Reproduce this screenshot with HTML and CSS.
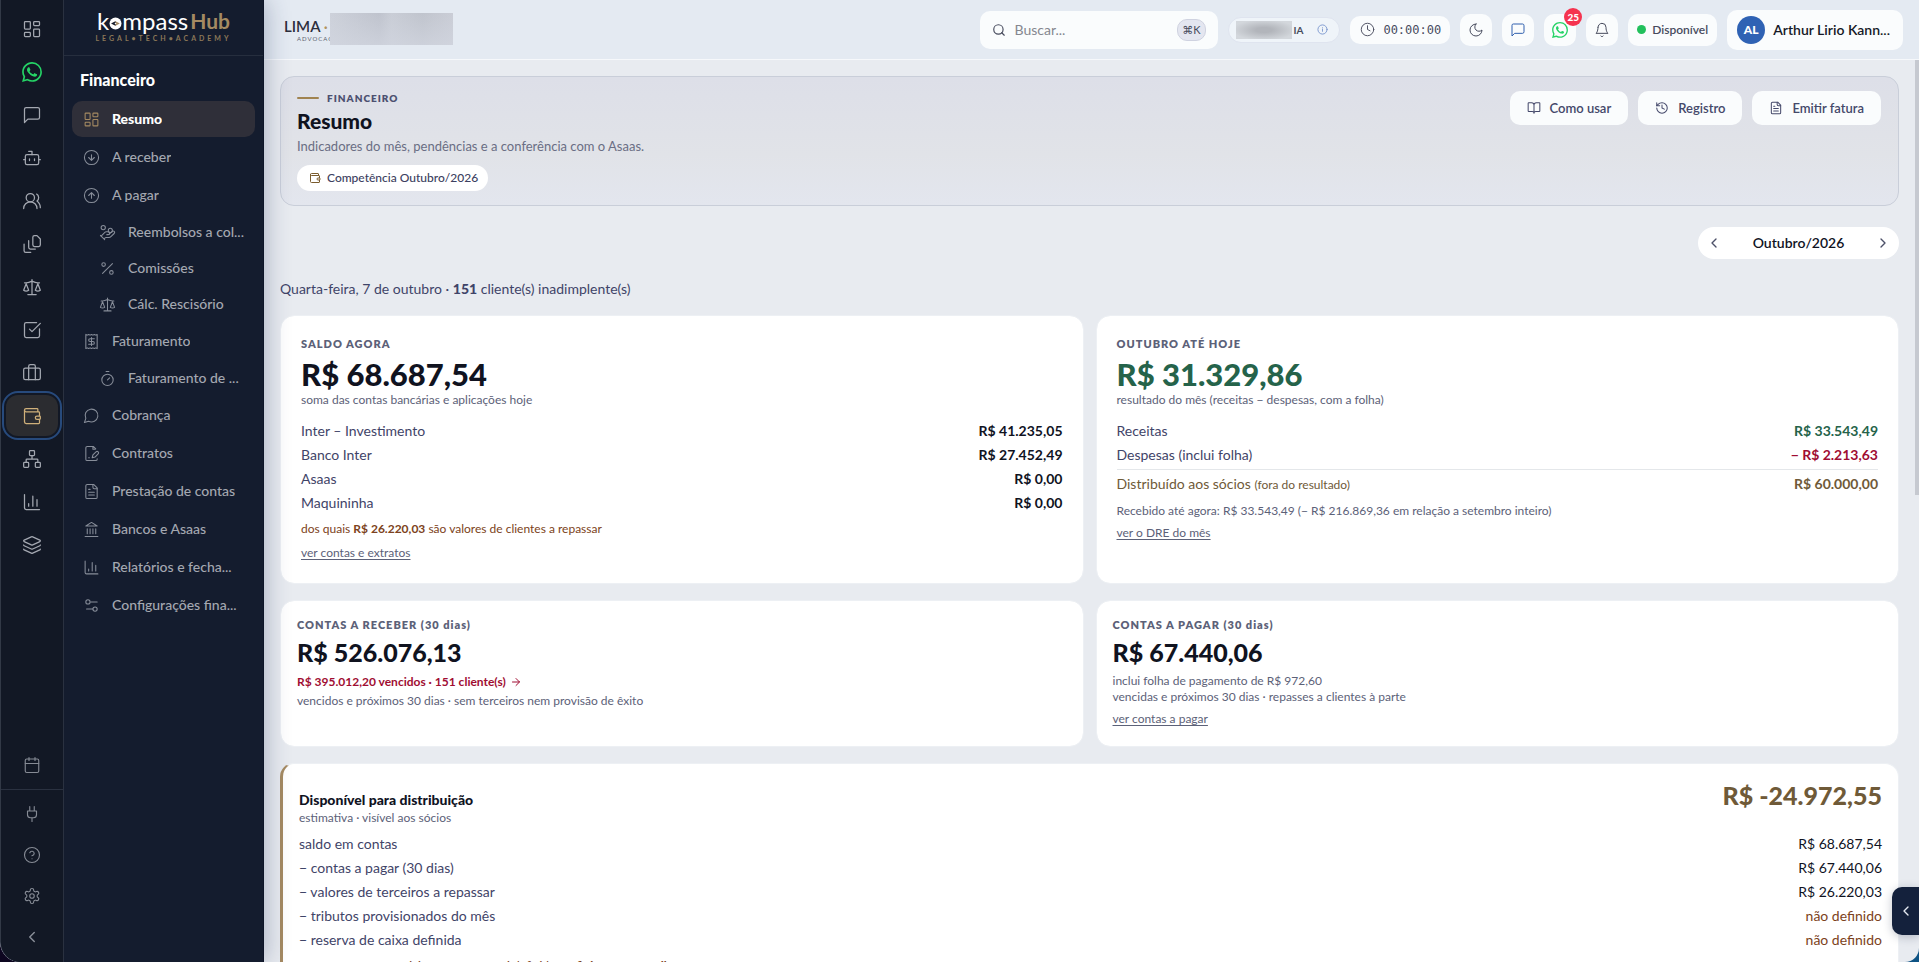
FILE: index.html
```html
<!DOCTYPE html>
<html lang="pt-BR">
<head>
<meta charset="utf-8">
<meta name="viewport" content="width=device-width, initial-scale=1">
<title>Resumo · Financeiro · kompassHub</title>
<link rel="stylesheet" href="styles.css">
</head>
<body>
<svg class="sprite" aria-hidden="true">
  <symbol id="i-dash" viewBox="0 0 24 24"><rect x="3" y="3" width="7" height="9" rx="1"/><rect x="14" y="3" width="7" height="5" rx="1"/><rect x="14" y="12" width="7" height="9" rx="1"/><rect x="3" y="16" width="7" height="5" rx="1"/></symbol>
  <symbol id="i-wa" viewBox="0 0 24 24"><path fill="currentColor" stroke="none" d="M17.472 14.382c-.297-.149-1.758-.867-2.03-.967-.273-.099-.471-.148-.67.15-.197.297-.767.966-.94 1.164-.173.199-.347.223-.644.075-.297-.15-1.255-.463-2.39-1.475-.883-.788-1.48-1.761-1.653-2.059-.173-.297-.018-.458.13-.606.134-.133.298-.347.446-.52.149-.174.198-.298.298-.497.099-.198.05-.371-.025-.52-.075-.149-.669-1.612-.916-2.207-.242-.579-.487-.5-.669-.51-.173-.008-.371-.01-.57-.01-.198 0-.52.074-.792.372-.272.297-1.04 1.016-1.04 2.479 0 1.462 1.065 2.875 1.213 3.074.149.198 2.096 3.2 5.077 4.487.709.306 1.262.489 1.694.625.712.227 1.36.195 1.871.118.571-.085 1.758-.719 2.006-1.413.248-.694.248-1.289.173-1.413-.074-.124-.272-.198-.57-.347m-5.421 7.403h-.004a9.87 9.87 0 01-5.031-1.378l-.361-.214-3.741.982.998-3.648-.235-.374a9.86 9.86 0 01-1.51-5.26c.001-5.45 4.436-9.884 9.888-9.884 2.64 0 5.122 1.03 6.988 2.898a9.825 9.825 0 012.893 6.994c-.003 5.45-4.437 9.884-9.885 9.884m8.413-18.297A11.815 11.815 0 0012.05 0C5.495 0 .16 5.335.157 11.892c0 2.096.547 4.142 1.588 5.945L.057 24l6.305-1.654a11.882 11.882 0 005.683 1.448h.005c6.554 0 11.89-5.335 11.893-11.893a11.821 11.821 0 00-3.48-8.413z"/></symbol>
  <symbol id="i-msg" viewBox="0 0 24 24"><path d="M21 15a2 2 0 0 1-2 2H7l-4 4V5a2 2 0 0 1 2-2h14a2 2 0 0 1 2 2z"/></symbol>
  <symbol id="i-bot" viewBox="0 0 24 24"><path d="M12 8V4H8"/><rect x="4" y="8" width="16" height="12" rx="2"/><path d="M2 14h2M20 14h2M15 13v2M9 13v2"/></symbol>
  <symbol id="i-users" viewBox="0 0 24 24"><path d="M18 21a8 8 0 0 0-16 0"/><circle cx="10" cy="8" r="5"/><path d="M22 20c0-3.37-2-6.5-4-8a5 5 0 0 0-.45-8.3"/></symbol>
  <symbol id="i-files" viewBox="0 0 24 24"><path d="M20 15h-5a2 2 0 0 1-2-2V4a2 2 0 0 1 2-2h3l4 4v7a2 2 0 0 1-2 2z"/><path d="M8 8v8a2 2 0 0 0 2 2h6M2.500 12v8a2 2 0 0 0 2 2h6"/></symbol>
  <symbol id="i-scale" viewBox="0 0 24 24"><path d="m16 16 3-8 3 8c-.87.65-1.920 1-3 1s-2.130-.35-3-1Z"/><path d="m2 16 3-8 3 8c-.87.65-1.920 1-3 1s-2.130-.35-3-1Z"/><path d="M7 21h10M12 3v18M3 7h2c2 0 5-1 7-2 2 1 5 2 7 2h2"/></symbol>
  <symbol id="i-check" viewBox="0 0 24 24"><path d="M21 10.500V19a2 2 0 0 1-2 2H5a2 2 0 0 1-2-2V5a2 2 0 0 1 2-2h12.500"/><path d="m9 11 3 3L22 4"/></symbol>
  <symbol id="i-case" viewBox="0 0 24 24"><rect x="2" y="6" width="20" height="14" rx="2"/><path d="M16 20V4a2 2 0 0 0-2-2h-4a2 2 0 0 0-2 2v16"/></symbol>
  <symbol id="i-wallet" viewBox="0 0 24 24"><path d="M19 7V4a1 1 0 0 0-1-1H5a2 2 0 0 0 0 4h15a1 1 0 0 1 1 1v4h-3a2 2 0 0 0 0 4h3a1 1 0 0 0 1-1v-2a1 1 0 0 0-1-1"/><path d="M3 5v14a2 2 0 0 0 2 2h15a1 1 0 0 0 1-1v-4"/></symbol>
  <symbol id="i-org" viewBox="0 0 24 24"><rect x="16" y="16" width="6" height="6" rx="1"/><rect x="2" y="16" width="6" height="6" rx="1"/><rect x="9" y="2" width="6" height="6" rx="1"/><path d="M5 16v-3a1 1 0 0 1 1-1h12a1 1 0 0 1 1 1v3M12 12V8"/></symbol>
  <symbol id="i-chart" viewBox="0 0 24 24"><path d="M3 3v16a2 2 0 0 0 2 2h16M18 17V9M13 17V5M8 17v-3"/></symbol>
  <symbol id="i-layers" viewBox="0 0 24 24"><path d="M12.830 2.180a2 2 0 0 0-1.660 0L2.600 6.080a1 1 0 0 0 0 1.830l8.580 3.910a2 2 0 0 0 1.660 0l8.580-3.900a1 1 0 0 0 0-1.830z"/><path d="M2 12a1 1 0 0 0 .58.91l8.600 3.910a2 2 0 0 0 1.650 0l8.580-3.900A1 1 0 0 0 22 12"/><path d="M2 17a1 1 0 0 0 .58.91l8.600 3.910a2 2 0 0 0 1.650 0l8.580-3.900A1 1 0 0 0 22 17"/></symbol>
  <symbol id="i-cal" viewBox="0 0 24 24"><path d="M8 2v4M16 2v4M3 10h18"/><rect x="3" y="4" width="18" height="18" rx="2"/></symbol>
  <symbol id="i-plug" viewBox="0 0 24 24"><path d="M12 22v-5M9 8V2M15 8V2M18 8v5a4 4 0 0 1-4 4h-4a4 4 0 0 1-4-4V8Z"/></symbol>
  <symbol id="i-help" viewBox="0 0 24 24"><circle cx="12" cy="12" r="10"/><path d="M9.090 9a3 3 0 0 1 5.830 1c0 2-3 3-3 3M12 17h.01"/></symbol>
  <symbol id="i-gear" viewBox="0 0 24 24"><path d="M12.220 2h-.44a2 2 0 0 0-2 2v.18a2 2 0 0 1-1 1.730l-.43.25a2 2 0 0 1-2 0l-.15-.08a2 2 0 0 0-2.730.73l-.22.38a2 2 0 0 0 .73 2.730l.15.1a2 2 0 0 1 1 1.720v.51a2 2 0 0 1-1 1.740l-.15.09a2 2 0 0 0-.73 2.730l.22.38a2 2 0 0 0 2.730.73l.15-.08a2 2 0 0 1 2 0l.43.25a2 2 0 0 1 1 1.730V20a2 2 0 0 0 2 2h.44a2 2 0 0 0 2-2v-.18a2 2 0 0 1 1-1.730l.43-.25a2 2 0 0 1 2 0l.15.08a2 2 0 0 0 2.730-.73l.22-.39a2 2 0 0 0-.73-2.730l-.15-.08a2 2 0 0 1-1-1.740v-.5a2 2 0 0 1 1-1.740l.15-.09a2 2 0 0 0 .73-2.730l-.22-.38a2 2 0 0 0-2.730-.73l-.15.08a2 2 0 0 1-2 0l-.43-.25a2 2 0 0 1-1-1.730V4a2 2 0 0 0-2-2z"/><circle cx="12" cy="12" r="3"/></symbol>
  <symbol id="i-left" viewBox="0 0 24 24"><path d="m15 18-6-6 6-6"/></symbol>
  <symbol id="i-right" viewBox="0 0 24 24"><path d="m9 18 6-6-6-6"/></symbol>
  <symbol id="i-down" viewBox="0 0 24 24"><circle cx="12" cy="12" r="10"/><path d="M12 8v8M8 12l4 4 4-4"/></symbol>
  <symbol id="i-up" viewBox="0 0 24 24"><circle cx="12" cy="12" r="10"/><path d="m16 12-4-4-4 4M12 16V8"/></symbol>
  <symbol id="i-coins" viewBox="0 0 24 24"><path d="M11 15h2a2 2 0 1 0 0-4h-3c-.6 0-1.100.2-1.400.6L3 17"/><path d="m7 21 1.600-1.400c.3-.4.8-.6 1.400-.6h4c1.100 0 2.100-.4 2.800-1.200l4.600-4.400a2 2 0 0 0-2.750-2.910l-4.200 3.900M2 16l6 6"/><circle cx="16" cy="9" r="2.900"/><circle cx="6" cy="5" r="3"/></symbol>
  <symbol id="i-pct" viewBox="0 0 24 24"><path d="M19 5 5 19"/><circle cx="6.500" cy="6.500" r="2.500"/><circle cx="17.500" cy="17.500" r="2.500"/></symbol>
  <symbol id="i-receipt" viewBox="0 0 24 24"><path d="M4 2v20l2-1 2 1 2-1 2 1 2-1 2 1 2-1 2 1V2l-2 1-2-1-2 1-2-1-2 1-2-1-2 1Z"/><path d="M16 8h-6a2 2 0 1 0 0 4h4a2 2 0 1 1 0 4H8M12 17.500v-11"/></symbol>
  <symbol id="i-timer" viewBox="0 0 24 24"><path d="M10 2h4M12 14l3-3"/><circle cx="12" cy="14" r="8"/></symbol>
  <symbol id="i-bubble" viewBox="0 0 24 24"><path d="M7.900 20A9 9 0 1 0 4 16.100L2 22Z"/></symbol>
  <symbol id="i-sign" viewBox="0 0 24 24"><path d="M20 19.500v.5a2 2 0 0 1-2 2H6a2 2 0 0 1-2-2V4a2 2 0 0 1 2-2h8.500L18 5.500M8 18h1M14 2v4h3"/><path d="M18.400 9.600a2 2 0 0 1 3 3L17 17l-4 1 1-4Z"/></symbol>
  <symbol id="i-doc" viewBox="0 0 24 24"><path d="M15 2H6a2 2 0 0 0-2 2v16a2 2 0 0 0 2 2h12a2 2 0 0 0 2-2V7Z"/><path d="M14 2v4a2 2 0 0 0 2 2h4M10 9H8M16 13H8M16 17H8"/></symbol>
  <symbol id="i-bank" viewBox="0 0 24 24"><path d="M3 22h18M6 18v-7M10 18v-7M14 18v-7M18 18v-7M12 2l8 5H4z"/></symbol>
  <symbol id="i-conf" viewBox="0 0 24 24"><path d="M20 7h-9M14 17H5"/><circle cx="17" cy="17" r="3"/><circle cx="7" cy="7" r="3"/></symbol>
  <symbol id="i-search" viewBox="0 0 24 24"><circle cx="11" cy="11" r="8"/><path d="m21 21-4.300-4.300"/></symbol>
  <symbol id="i-info" viewBox="0 0 24 24"><circle cx="12" cy="12" r="10"/><path d="M12 16v-5M12 8h.01"/></symbol>
  <symbol id="i-clock" viewBox="0 0 24 24"><circle cx="12" cy="12" r="10"/><path d="M12 6v6l4 2"/></symbol>
  <symbol id="i-moon" viewBox="0 0 24 24"><path d="M12 3a6 6 0 0 0 9 9 9 9 0 1 1-9-9Z"/></symbol>
  <symbol id="i-bell" viewBox="0 0 24 24"><path d="M10.300 21a1.940 1.940 0 0 0 3.400 0M6 8a6 6 0 0 1 12 0c0 7 3 9 3 9H3s3-2 3-9"/></symbol>
  <symbol id="i-book" viewBox="0 0 24 24"><path d="M12 7v14M3 18a1 1 0 0 1-1-1V4a1 1 0 0 1 1-1h5a4 4 0 0 1 4 4 4 4 0 0 1 4-4h5a1 1 0 0 1 1 1v13a1 1 0 0 1-1 1h-6a3 3 0 0 0-3 3 3 3 0 0 0-3-3z"/></symbol>
  <symbol id="i-hist" viewBox="0 0 24 24"><path d="M3 12a9 9 0 1 0 9-9 9.750 9.750 0 0 0-6.740 2.740L3 8"/><path d="M3 3v5h5M12 7v5l4 2"/></symbol>
  <symbol id="i-arrow" viewBox="0 0 24 24"><path d="M5 12h14M12 5l7 7-7 7"/></symbol>
</svg>

<div class="app">
  <aside class="sidebar">
    <nav class="rail" aria-label="Módulos">
      <div class="rail-main">
        <a href="#" aria-label="Painel"><svg><use href="#i-dash"/></svg></a>
        <a href="#" aria-label="WhatsApp" class="rail-wa"><svg><use href="#i-wa"/></svg></a>
        <a href="#" aria-label="Mensagens"><svg><use href="#i-msg"/></svg></a>
        <a href="#" aria-label="Assistente"><svg><use href="#i-bot"/></svg></a>
        <a href="#" aria-label="Clientes"><svg><use href="#i-users"/></svg></a>
        <a href="#" aria-label="Documentos"><svg><use href="#i-files"/></svg></a>
        <a href="#" aria-label="Processos"><svg><use href="#i-scale"/></svg></a>
        <a href="#" aria-label="Tarefas"><svg><use href="#i-check"/></svg></a>
        <a href="#" aria-label="Casos"><svg><use href="#i-case"/></svg></a>
        <a href="#" aria-label="Financeiro" class="rail-active"><svg><use href="#i-wallet"/></svg></a>
        <a href="#" aria-label="Organização"><svg><use href="#i-org"/></svg></a>
        <a href="#" aria-label="Relatórios"><svg><use href="#i-chart"/></svg></a>
        <a href="#" aria-label="Camadas"><svg><use href="#i-layers"/></svg></a>
      </div>
      <a href="#" class="rail-cal" aria-label="Agenda"><svg><use href="#i-cal"/></svg></a>
      <div class="rail-foot">
        <a href="#" aria-label="Integrações"><svg><use href="#i-plug"/></svg></a>
        <a href="#" aria-label="Ajuda"><svg><use href="#i-help"/></svg></a>
        <a href="#" aria-label="Configurações"><svg><use href="#i-gear"/></svg></a>
        <button type="button" aria-label="Recolher menu"><svg><use href="#i-left"/></svg></button>
      </div>
    </nav>
    <div class="panel">
      <div class="logo">
        <div class="logo-name">k<svg viewBox="0 0 24 24" role="img" aria-label="o"><circle cx="12" cy="12" r="11" fill="#fff"/><path d="m4 12 8-4 8 4-8 4z" fill="#a58a62"/><path d="m4 12 8-4v8z" fill="#141d30"/><circle cx="12" cy="12" r="1.500" fill="#fff"/></svg>mpass<span>Hub</span></div>
        <div class="logo-tag">LEGAL•TECH•ACADEMY</div>
      </div>
      <nav class="menu" aria-label="Financeiro">
        <h2>Financeiro</h2>
        <a href="#" class="on"><svg><use href="#i-dash"/></svg><span>Resumo</span></a>
        <a href="#"><svg><use href="#i-down"/></svg><span>A receber</span></a>
        <a href="#"><svg><use href="#i-up"/></svg><span>A pagar</span></a>
        <a href="#" class="sub"><svg><use href="#i-coins"/></svg><span>Reembolsos a col...</span></a>
        <a href="#" class="sub"><svg><use href="#i-pct"/></svg><span>Comissões</span></a>
        <a href="#" class="sub"><svg><use href="#i-scale"/></svg><span>Cálc. Rescisório</span></a>
        <a href="#"><svg><use href="#i-receipt"/></svg><span>Faturamento</span></a>
        <a href="#" class="sub"><svg><use href="#i-timer"/></svg><span>Faturamento de ...</span></a>
        <a href="#"><svg><use href="#i-bubble"/></svg><span>Cobrança</span></a>
        <a href="#"><svg><use href="#i-sign"/></svg><span>Contratos</span></a>
        <a href="#"><svg><use href="#i-doc"/></svg><span>Prestação de contas</span></a>
        <a href="#"><svg><use href="#i-bank"/></svg><span>Bancos e Asaas</span></a>
        <a href="#"><svg><use href="#i-chart"/></svg><span>Relatórios e fecha...</span></a>
        <a href="#"><svg><use href="#i-conf"/></svg><span>Configurações fina...</span></a>
      </nav>
    </div>
  </aside>

  <div class="page">
    <header class="top">
      <div class="brand">
        <div class="brand-name">LIMA <i>·</i></div>
        <div class="brand-sub">ADVOCAC</div>
        <div class="brand-mask"></div>
      </div>
      <label class="search">
        <svg><use href="#i-search"/></svg>
        <input type="search" placeholder="Buscar..." aria-label="Buscar">
        <kbd>⌘K</kbd>
      </label>
      <button type="button" class="ai"><span class="ai-mask"></span>IA<svg><use href="#i-info"/></svg></button>
      <button type="button" class="clock"><svg><use href="#i-clock"/></svg>00:00:00</button>
      <button type="button" class="sq" aria-label="Tema escuro"><svg><use href="#i-moon"/></svg></button>
      <button type="button" class="sq sq-blue" aria-label="Mensagens"><svg><use href="#i-msg"/></svg></button>
      <button type="button" class="sq sq-green" aria-label="WhatsApp"><svg><use href="#i-wa"/></svg><span class="badge">25</span></button>
      <button type="button" class="sq" aria-label="Notificações"><svg><use href="#i-bell"/></svg></button>
      <button type="button" class="status"><span class="dot"></span>Disponível</button>
      <button type="button" class="user"><span class="avatar">AL</span>Arthur Lirio Kann...</button>
    </header>

    <main class="content">
      <section class="hero">
        <div>
          <p class="eyebrow">FINANCEIRO</p>
          <h1>Resumo</h1>
          <p class="lead">Indicadores do mês, pendências e a conferência com o Asaas.</p>
          <span class="chip"><svg><use href="#i-wallet"/></svg>Competência Outubro/2026</span>
        </div>
        <div class="actions">
          <button type="button"><svg><use href="#i-book"/></svg>Como usar</button>
          <button type="button"><svg><use href="#i-hist"/></svg>Registro</button>
          <button type="button"><svg><use href="#i-doc"/></svg>Emitir fatura</button>
        </div>
      </section>

      <div class="month">
        <button type="button" aria-label="Mês anterior"><svg><use href="#i-left"/></svg></button>
        <strong>Outubro/2026</strong>
        <button type="button" aria-label="Próximo mês"><svg><use href="#i-right"/></svg></button>
      </div>

      <p class="today">Quarta-feira, 7 de outubro · <b>151</b> cliente(s) inadimplente(s)</p>

      <div class="cards">
        <section class="card card-lg">
          <h3>SALDO AGORA</h3>
          <p class="amount">R$ 68.687,54</p>
          <p class="small">soma das contas bancárias e aplicações hoje</p>
          <dl class="rows">
            <div><dt>Inter – Investimento</dt><dd>R$ 41.235,05</dd></div>
            <div><dt>Banco Inter</dt><dd>R$ 27.452,49</dd></div>
            <div><dt>Asaas</dt><dd>R$ 0,00</dd></div>
            <div><dt>Maquininha</dt><dd>R$ 0,00</dd></div>
          </dl>
          <p class="small warn">dos quais <b>R$ 26.220,03</b> são valores de clientes a repassar</p>
          <a href="#" class="more">ver contas e extratos</a>
        </section>

        <section class="card card-lg">
          <h3>OUTUBRO ATÉ HOJE</h3>
          <p class="amount green">R$ 31.329,86</p>
          <p class="small">resultado do mês (receitas − despesas, com a folha)</p>
          <dl class="rows">
            <div><dt>Receitas</dt><dd class="green">R$ 33.543,49</dd></div>
            <div><dt>Despesas (inclui folha)</dt><dd class="red">− R$ 2.213,63</dd></div>
            <div class="split"><dt>Distribuído aos sócios <small>(fora do resultado)</small></dt><dd>R$ 60.000,00</dd></div>
          </dl>
          <p class="small">Recebido até agora: R$ 33.543,49 (− R$ 216.869,36 em relação a setembro inteiro)</p>
          <a href="#" class="more">ver o DRE do mês</a>
        </section>

        <section class="card">
          <h3>CONTAS A RECEBER (30 dias)</h3>
          <p class="amount">R$ 526.076,13</p>
          <a href="#" class="overdue">R$ 395.012,20 vencidos · 151 cliente(s) <svg><use href="#i-arrow"/></svg></a>
          <p class="small">vencidos e próximos 30 dias · sem terceiros nem provisão de êxito</p>
        </section>

        <section class="card">
          <h3>CONTAS A PAGAR (30 dias)</h3>
          <p class="amount">R$ 67.440,06</p>
          <p class="small">inclui folha de pagamento de R$ 972,60</p>
          <p class="small">vencidas e próximos 30 dias · repasses a clientes à parte</p>
          <a href="#" class="more">ver contas a pagar</a>
        </section>

        <section class="card wide">
          <div class="wide-head">
            <div>
              <h2>Disponível para distribuição</h2>
              <p class="small">estimativa · visível aos sócios</p>
            </div>
            <p class="amount">R$ -24.972,55</p>
          </div>
          <dl class="rows plain">
            <div><dt>saldo em contas</dt><dd>R$ 68.687,54</dd></div>
            <div><dt>− contas a pagar (30 dias)</dt><dd>R$ 67.440,06</dd></div>
            <div><dt>− valores de terceiros a repassar</dt><dd>R$ 26.220,03</dd></div>
            <div><dt>− tributos provisionados do mês</dt><dd class="warn">não definido</dd></div>
            <div><dt>− reserva de caixa definida</dt><dd class="warn">não definido</dd></div>
          </dl>
          <p class="small warn">Os números são parciais: reserva não foi definida. <b>Definir reserva e tributos</b></p>
        </section>
      </div>
    </main>
    <div class="scroll-thumb"></div>
    <button type="button" class="drawer" aria-label="Abrir painel lateral"><svg><use href="#i-left"/></svg></button>
  </div>
</div>
</body>
</html>
```
FILE: styles.css
```css
* { box-sizing: border-box; }

body {
  margin: 0;
  height: 100vh;
  overflow: hidden;
  font-family: Lato, "Open Sans", sans-serif;
  font-size: 14px;
  line-height: 20px;
  color: #10131f;
  background: linear-gradient(90deg, #0d0620 0, #0d0620 50%, #0e5384 100%);
}

h1, h2, h3, p, dl, dd { margin: 0; }
a { color: inherit; text-decoration: none; }
button, input { font: inherit; color: inherit; }
button { padding: 0; border: 0; background: none; cursor: pointer; }

svg {
  flex: none;
  width: 16px;
  height: 16px;
  fill: none;
  stroke: currentColor;
  stroke-width: 2;
  stroke-linecap: round;
  stroke-linejoin: round;
}
.sprite { position: absolute; width: 0; height: 0; }

.app {
  display: flex;
  height: 100%;
  overflow: hidden;
  border-radius: 0 0 14px 20px;
  background: #e8ebf0;
}

/* Sidebar */
.sidebar {
  position: relative;
  z-index: 2;
  display: flex;
  flex: none;
  color: #a4a8b1;
  background: #141c2e;
  border-left: 1px solid #323946;
  border-radius: 0 0 0 20px;
  box-shadow: 2px 0 24px rgba(30, 45, 90, 0.3);
}
.rail {
  display: flex;
  flex-direction: column;
  width: 63px;
  background: #121825;
  border-right: 1px solid #2a3140;
  border-radius: 0 0 0 20px;
}
.rail svg { width: 20px; height: 20px; stroke-width: 1.5; }
.rail-main {
  display: flex;
  flex: 1;
  flex-direction: column;
  gap: 2px;
  padding: 8px 5px;
}
.rail a, .rail button { display: flex; align-items: center; justify-content: center; height: 41px; border-radius: 12px; }
.rail .rail-wa { color: #25d366; }
.rail .rail-active {
  color: #cfb07a;
  background: #2b2c30;
  outline: 2px solid #274a7c;
  outline-offset: 2px;
}
.rail .rail-cal { height: 50px; border-bottom: 1px solid #2a3140; border-radius: 0; }
.rail .rail-cal svg, .rail-foot svg { width: 18px; height: 18px; color: #868b95; }
.rail-foot { display: flex; flex-direction: column; padding: 3px 5px 5px; }
.rail-foot button svg { stroke-width: 2; }

.panel { width: 200px; border-right: 1px solid #0e1528; }
.logo {
  display: flex;
  flex-direction: column;
  align-items: center;
  height: 56px;
  padding-top: 8px;
  border-bottom: 1px solid #262e3e;
}
.logo-name { display: flex; align-items: center; height: 26px; color: #fff; font-size: 24px; }
.logo-name svg { width: 13px; height: 13px; margin-top: 5px; stroke: none; }
.logo-name span { margin-left: 2px; color: #a58a62; font-weight: 700; font-size: 21px; }
.logo-tag { font-size: 7px; line-height: 8px; font-weight: 700; letter-spacing: 3px; color: #8c7858; white-space: nowrap; }

.menu { display: flex; flex-direction: column; gap: 2px; padding: 12px 8px; }
.menu h2 { padding: 2px 8px 9px; color: #fff; font-size: 16px; line-height: 20px; font-weight: 900; }
.menu a {
  display: flex;
  align-items: center;
  gap: 12px;
  height: 36px;
  padding: 0 8px 0 11px;
  border-radius: 10px;
  font-weight: 500;
}
.menu span { overflow: hidden; white-space: nowrap; }
.menu svg { width: 17px; height: 17px; stroke-width: 1.5; color: #878d99; }
.menu .sub { height: 34px; padding-left: 27px; }
.menu .on { color: #fff; font-weight: 900; background: #2f2f39; }
.menu .on svg { color: #a58a62; }

/* Header */
.page { position: relative; display: flex; flex: 1; flex-direction: column; min-width: 0; }
.top {
  display: flex;
  flex: none;
  align-items: center;
  gap: 10px;
  height: 60px;
  padding: 0 16px 0 20px;
  color: #474b5d;
  background: #e4eaf2;
  border-bottom: 1px solid #f6f8fb;
}
.brand { position: relative; margin-right: auto; width: 170px; color: #2c2e3c; }
.brand-name { font-size: 15px; line-height: 18px; font-weight: 600; }
.brand-name i { color: #b0935e; font-style: normal; }
.brand-sub { padding-left: 13px; font-size: 6px; line-height: 8px; letter-spacing: 1px; color: #5b5f6e; }
.brand-mask {
  position: absolute;
  top: -4px;
  left: 46px;
  width: 123px;
  height: 32px;
  background: linear-gradient(0deg, rgba(210, 214, 224, 0.7), rgba(210, 214, 224, 0)), linear-gradient(90deg, #cdd1da 0%, #bfc3cd 40%, #c9cdd6 50%, #c0c4cd 75%, #cacdd6 100%);
}

.search {
  display: flex;
  align-items: center;
  gap: 9px;
  width: 238px;
  height: 38px;
  padding: 0 12px;
  border-radius: 10px;
  background: #fafcfd;
}
.search svg { width: 14px; height: 14px; }
.search input { flex: 1; min-width: 0; padding: 0; border: 0; outline: 0; background: none; }
.search input::placeholder { color: #85878f; opacity: 1; }
.search kbd {
  padding: 0 4px;
  border: 1px solid #cfd2e0;
  border-radius: 10px;
  background: #e4e6f0;
  font: 11px/20px Lato, "DejaVu Sans", sans-serif;
}
.ai {
  display: flex;
  align-items: center;
  gap: 2px;
  height: 26px;
  padding: 0 11px 0 7px;
  border: 1px solid #dfe4ef;
  border-radius: 13px;
  background: #eff4f9;
  font-size: 10px;
  font-weight: 700;
}
.ai svg { width: 11px; height: 11px; margin-left: 12px; color: #7b97cf; }
.ai-mask { width: 56px; height: 18px; background: radial-gradient(ellipse, #b2b5bb 20%, #d3d7dc 80%); }
.clock, .sq, .status, .user { display: flex; align-items: center; background: #fafcfd; border-radius: 10px; }
.clock {
  gap: 8px;
  height: 28px;
  padding: 0 9px 0 10px;
  font: 12px/20px "DejaVu Sans Mono", monospace;
}
.clock svg { width: 15px; height: 15px; stroke-width: 1.5; }
.sq { position: relative; justify-content: center; width: 32px; height: 32px; }
.sq svg { stroke-width: 1.5; }
.sq-blue { color: #2f5fae; }
.sq-green { color: #25d366; }
.badge {
  position: absolute;
  top: -6px;
  right: -6px;
  width: 18px;
  height: 18px;
  border-radius: 9px;
  background: #f5334f;
  color: #fff;
  font-size: 10px;
  line-height: 18px;
  font-weight: 900;
}
.status { gap: 6px; height: 32px; padding: 0 9px; font-size: 12px; font-weight: 600; }
.dot { width: 9px; height: 9px; border-radius: 50%; background: #22c05c; }
.user { gap: 8px; height: 40px; padding: 0 13px 0 10px; font-weight: 600; color: #151826; }
.avatar {
  width: 28px;
  height: 28px;
  border-radius: 50%;
  background: #2f62b4;
  color: #fff;
  font-size: 12px;
  line-height: 28px;
  font-weight: 900;
}

/* Content */
.content {
  display: flex;
  flex: 1;
  flex-direction: column;
  min-height: 0;
  padding: 16px 20px 0 16px;
  overflow-y: auto;
  scrollbar-width: none;
}
.hero {
  display: flex;
  flex: none;
  justify-content: space-between;
  align-items: flex-start;
  padding: 14px 17px 14px 16px;
  border: 1px solid #c9ced9;
  border-radius: 14px;
  background: linear-gradient(180deg, #dddfe8 0%, #e1e3e8 60%, #e3e6ee 100%);
}
.eyebrow {
  display: flex;
  align-items: center;
  gap: 8px;
  font-size: 10px;
  line-height: 14px;
  font-weight: 800;
  letter-spacing: 1px;
  color: #4c5070;
}
.eyebrow::before { content: ""; width: 22px; height: 2px; border-radius: 1px; background: #a08350; }
h1 { margin-top: 4px; font-size: 21px; line-height: 24px; font-weight: 900; color: #10131f; }
.lead { margin-top: 4px; font-size: 13px; line-height: 18px; color: #6a6e84; }
.chip {
  display: inline-flex;
  align-items: center;
  gap: 6px;
  height: 26px;
  margin-top: 10px;
  padding: 0 10px 0 12px;
  border-radius: 13px;
  background: #fff;
  font-size: 12px;
  font-weight: 500;
  color: #3c4060;
  vertical-align: top;
}
.chip svg { width: 12px; height: 12px; color: #7a5c2e; }
.actions { display: flex; gap: 10px; }
.actions button {
  display: flex;
  align-items: center;
  gap: 9px;
  height: 34px;
  padding: 0 17px;
  border-radius: 10px;
  background: #fafcfd;
  font-size: 13px;
  font-weight: 600;
  color: #44486a;
}
.actions svg { width: 14px; height: 14px; stroke-width: 1.75; }

.month {
  display: flex;
  flex: none;
  align-items: center;
  justify-content: space-between;
  align-self: flex-end;
  width: 201px;
  height: 32px;
  margin-top: 21px;
  padding: 0 8px;
  border-radius: 16px;
  background: #fff;
}
.month button { display: flex; color: #4c5068; }
.month strong { font-weight: 600; }
.today { margin-top: 20px; color: #3f4468; }
.today b { font-weight: 900; }

.cards { display: grid; flex: none; grid-template-columns: 1fr 1fr; gap: 16px 12px; margin-top: 16px; padding-bottom: 16px; }
.card {
  padding: 16px 16px 19px;
  border: 1px solid #edf0f4;
  border-radius: 14px;
  background: #fff;
  background-clip: padding-box;
}
.card-lg { padding: 20px 20px 22px; }
.card h3 { font-size: 11px; line-height: 16px; font-weight: 800; letter-spacing: 1px; color: #5c6178; }
.amount { margin: 4px 0 6px; font-size: 25px; line-height: 30px; font-weight: 900; color: #10131f; }
.card-lg .amount { margin: 4px 0 0; font-size: 31px; line-height: 36px; }
.small { font-size: 12px; line-height: 16px; color: #5c6178; }
.rows { margin-top: 11px; color: #3f4468; }
.rows div { display: flex; justify-content: space-between; line-height: 24px; }
.rows dd { font-weight: 700; color: #10131f; }
.rows.plain { margin-top: 6px; }
.rows.plain dd { font-weight: 400; }
.rows .split { margin-top: 2px; padding-top: 2px; border-top: 1px solid #e4e7ea; color: #6f5a38; }
.rows .split dd { color: #6f5a38; }
.rows small { font-size: 12px; }
.rows + .small { margin-top: 6px; }
.more {
  display: inline-block;
  margin-top: 6px;
  font-size: 12px;
  line-height: 16px;
  color: #5c6178;
  text-decoration: underline;
  text-underline-offset: 2px;
  vertical-align: top;
}
.warn + .more { margin-top: 8px; }
.amount.green, .rows .green { color: #25634a; }
.rows .red { color: #a00d32; }
.small.warn, .rows.plain .warn { color: #7c4220; }
.overdue { display: flex; align-items: center; gap: 4px; font-size: 12px; line-height: 18px; font-weight: 700; color: #a00d32; }
.overdue svg { width: 12px; height: 12px; }
.overdue + .small { margin-top: 2px; }

.wide { grid-column: 1 / -1; border-left: 3px solid #a58a62; background-clip: border-box; }
.wide-head { display: flex; justify-content: space-between; align-items: flex-start; }
.wide-head div { padding-top: 10px; }
.wide h2 { font-size: 14px; line-height: 20px; font-weight: 900; }
.wide .amount { margin: 0; color: #6f5a38; }

.scroll-thumb { position: absolute; top: 60px; right: 0; width: 4px; height: 435px; background: #c6c9d0; }
.drawer {
  position: absolute;
  right: 0;
  bottom: 27px;
  display: flex;
  align-items: center;
  justify-content: center;
  width: 27px;
  height: 48px;
  border-radius: 10px 0 0 10px;
  background: #14213c;
  color: #e6eaf2;
  box-shadow: 0 2px 10px rgba(20, 33, 60, 0.25);
}
```
